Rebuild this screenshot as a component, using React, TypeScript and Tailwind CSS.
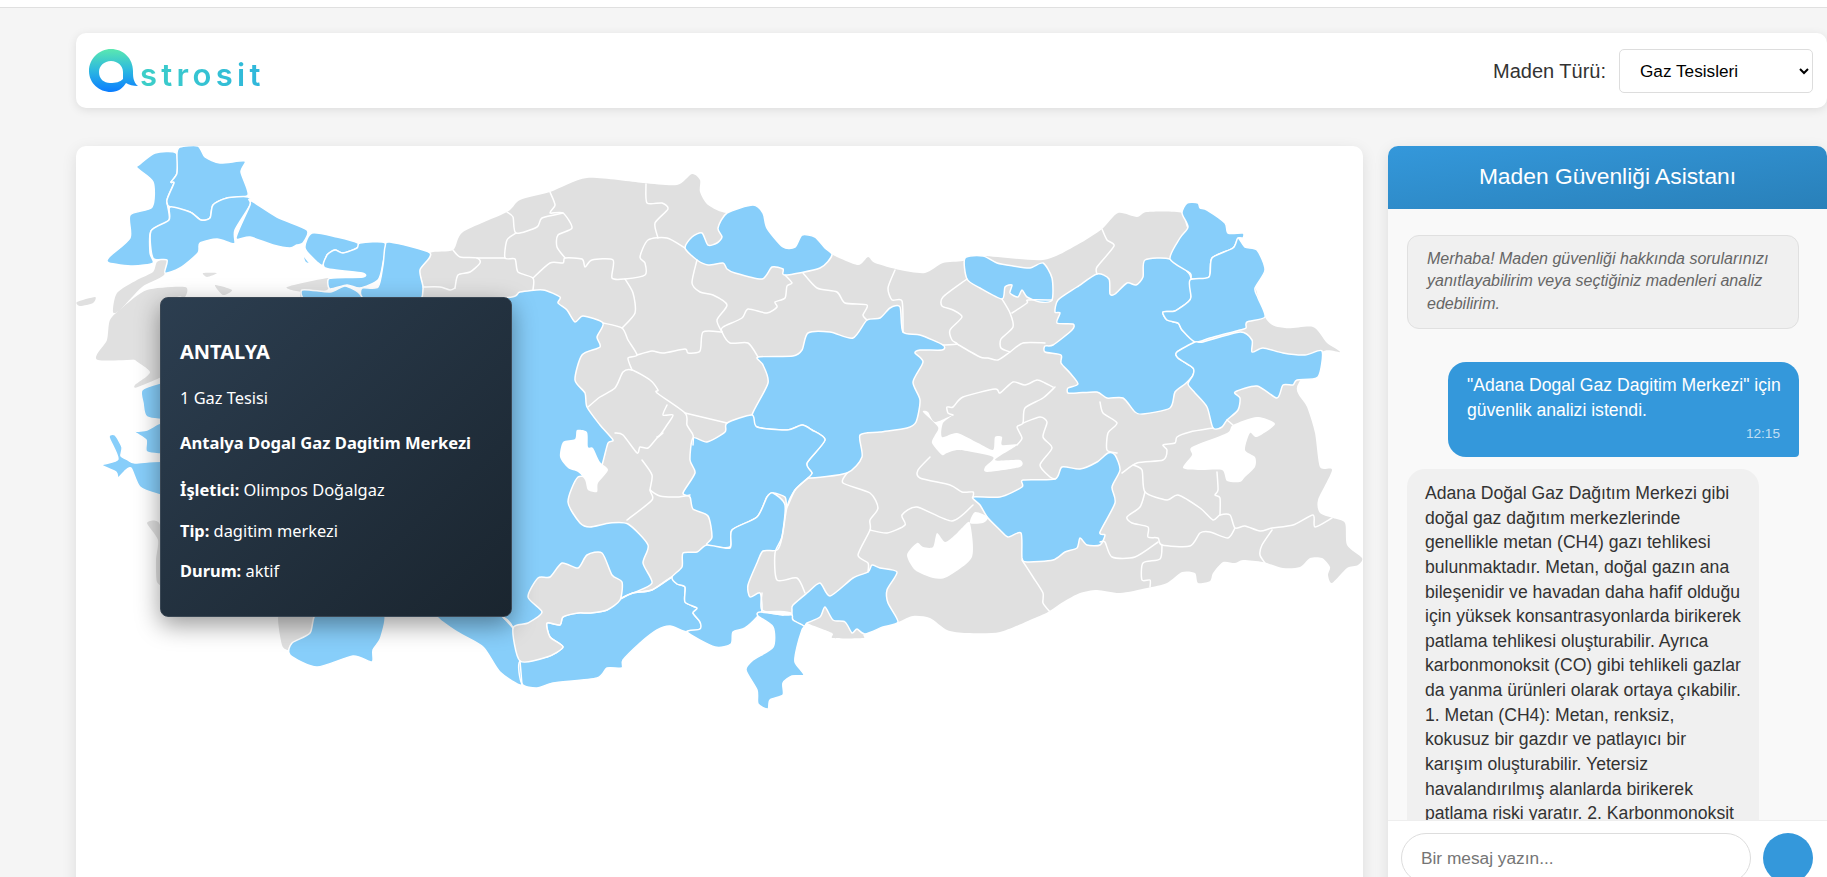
const baseLand =
  '430,253 453,250 463,232 507,212 520,200 550,192 587,178 643,183 677,185 692,174 700,180 700,192 708,205 727,213 753,205 763,213 767,228 783,247 795,247 802,235 815,237 825,248 833,255 858,265 868,257 875,263 900,270 925,273 943,263 963,261 983,256 1043,260 1077,245 1102,229 1118,213 1137,217 1147,212 1182,213 1190,230 1238,240 1265,317 1285,328 1313,327 1327,343 1340,352 1322,352 1297,387 1307,407 1315,433 1320,467 1332,470 1318,500 1320,513 1333,518 1345,523 1347,545 1362,558 1358,565 1347,568 1332,583 1328,575 1330,567 1322,558 1310,558 1300,567 1283,568 1263,562 1243,560 1235,563 1223,562 1213,573 1210,581 1198,583 1195,573 1182,572 1167,583 1147,588 1120,593 1097,590 1080,593 1063,602 1048,612 1037,617 1000,632 967,633 947,630 930,618 913,616 898,622 865,634 863,638 833,638 832,633 807,623 790,612 760,612 700,625 660,620 520,640 437,617 420,600 320,600 300,590 300,310 310,300 400,298 423,290 420,270';

const greyShapes = [
  '77,302 95,297 93,303 80,306',
  '167,259 164,275 142,287 120,310 113,312 117,293 137,280 153,272 157,262',
  '110,320 123,307 147,290 185,287 185,297 175,300 170,350 165,357 98,360 107,340',
  '133,357 170,357 170,372 138,387 135,385 150,372',
  '203,273 217,273 207,277',
  '215,285 232,290 223,295',
  '287,287 330,278 327,290 303,292',
  '147,523 160,525 165,582 157,582 156,560 158,540',
  '280,610 320,610 310,633 293,642 290,650 282,645',
];

const blueShapes = [
  '155,153 176,153 177,173 171,182 174,183 167,200 169,220 151,231 150,253 153,263 133,266 109,263 109,257 130,238 130,215 152,207 153,182 137,168 140,164',
  '177,153 180,147 198,146 205,157 220,163 245,161 241,172 248,195 227,198 213,205 210,218 201,220 190,212 170,207 167,200 174,183 171,182 177,173',
  '170,207 190,212 201,220 210,218 213,205 227,198 248,197 250,205 235,230 235,243 230,243 217,239 200,243 198,253 180,268 165,273 167,260 153,258 151,231 169,220',
  '250,200 277,217 307,230 303,243 297,245 290,248 273,245 250,237 236,238 250,205',
  '312,233 337,237 358,243 357,248 343,253 335,250 327,255 323,265 317,262 305,248',
  '360,243 385,243 383,263 378,280 360,288 347,285 330,289 328,280 333,278 363,277 362,273 325,268 327,255 335,250 343,253 357,248',
  '303,255 310,264 305,262',
  '390,242 430,253 420,270 423,287 421,300 415,305 365,305 361,297 362,288 378,287 383,265 385,247',
  '302,290 330,292 345,286 360,294 360,305 310,305',
  '142,390 160,383 170,383 170,417 147,417 143,403',
  '109,437 115,435 122,447 121,456 128,460 135,463 170,463 170,497 160,495 140,487 131,468 124,472 118,478 116,472 102,465 118,459',
  '135,432 147,430 160,423 170,423 170,452 147,452 146,440',
  '320,610 382,610 381,637 373,650 372,662 353,656 317,667 290,655 292,643 310,633',
  '520,292 543,290 560,297 558,303 567,310 575,322 583,316 603,323 597,337 600,347 582,355 575,380 585,393 587,407 600,425 613,440 608,443 602,465 595,478 578,477 568,502 580,523 590,527 610,523 628,524 648,545 643,563 652,583 633,593 622,598 607,610 590,613 560,625 520,661 513,628 503,617 480,610 445,608 435,600 430,590 430,320 435,305 460,300 512,297',
  '513,628 520,661 522,685 500,672 483,647 457,632 437,617 440,610 500,610 503,617',
  '520,661 547,657 563,647 550,637 547,623 560,625 563,617 578,613 590,613 607,610 622,598 633,593 652,590 672,577 677,584 685,587 685,602 697,608 693,613 700,622 700,629 687,632 670,626 657,630 640,643 623,660 622,668 607,668 597,678 553,683 537,688 522,684',
  '727,213 753,205 763,213 767,228 783,247 795,247 802,235 815,237 825,248 832,255 820,268 785,275 783,269 772,267 762,279 735,273 727,269 723,263 708,265 697,260 685,248 692,237 702,233 708,245 717,243 722,237 718,228',
  '758,357 793,356 802,350 808,333 830,332 853,338 867,320 880,318 890,308 900,307 903,332 920,335 943,345 942,350 920,350 915,353 923,362 913,382 920,400 916,422 907,428 880,432 860,435 862,457 847,473 808,478 812,473 807,463 825,440 812,430 802,425 787,430 757,427 752,415 768,383 763,365',
  '752,415 757,427 787,430 802,425 812,430 825,440 807,463 812,473 808,478 795,490 787,507 785,497 773,493 767,497 757,517 732,530 730,547 707,545 712,537 708,516 693,509 690,497 683,493 695,473 690,460 693,438 707,442 725,432 727,423',
  '707,545 730,548 732,530 757,517 767,497 773,493 785,505 782,537 777,550 763,551 757,563 748,585 750,597 760,593 762,610 758,616 745,628 733,632 731,644 715,647 687,632 700,629 700,622 693,613 697,608 685,602 685,587 677,584 672,577 682,567 683,553 697,552',
  '792,610 793,605 807,593 820,583 830,596 853,578 868,572 872,565 880,568 897,572 887,590 888,603 898,622 883,627 865,634 857,629 852,633 845,622 833,620 825,607 820,617 807,623 804,626 793,620',
  '760,612 783,615 792,615 793,620 804,626 802,630 797,647 795,662 804,675 792,676 783,683 783,695 770,700 768,709 758,704 757,690 746,670 753,660 773,647 773,627 758,616',
  '1108,453 1115,455 1120,470 1112,487 1115,503 1100,532 1105,535 1100,545 1087,545 1080,538 1077,548 1065,552 1053,560 1027,562 1022,558 1021,533 1008,537 1000,530 988,518 980,505 973,497 1000,497 1022,487 1023,480 1055,479 1062,467 1080,469 1097,462',
  '965,258 983,256 997,263 1013,266 1030,268 1043,263 1052,278 1052,300 1040,302 1027,297 1022,290 1018,297 1010,293 1012,285 1005,287 1002,299 980,288 967,279',
  '1097,274 1109,279 1110,294 1115,294 1127,283 1136,285 1143,277 1145,260 1170,259 1190,275 1191,297 1188,302 1175,311 1163,312 1167,320 1178,323 1182,330 1195,342 1177,352 1178,358 1193,368 1193,375 1185,384 1175,392 1170,408 1143,414 1135,412 1123,398 1107,398 1097,392 1077,393 1068,393 1068,388 1078,384 1070,373 1061,363 1061,355 1045,352 1045,346 1053,345 1072,330 1073,324 1057,323 1060,313 1055,312 1058,300 1077,287',
  '1182,213 1187,203 1198,203 1200,208 1207,210 1225,223 1228,233 1243,233 1243,238 1238,238 1233,248 1212,258 1209,277 1192,279 1190,273 1170,259 1180,238 1188,227',
  '1238,238 1245,247 1257,250 1265,270 1255,288 1258,298 1265,317 1247,322 1246,328 1240,330 1210,338 1195,342 1182,330 1178,323 1167,320 1163,312 1175,311 1188,302 1191,297 1190,280 1209,277 1212,258 1233,248',
  '1177,352 1195,342 1203,342 1240,332 1252,340 1252,352 1263,348 1283,353 1305,355 1322,351 1318,377 1297,380 1293,385 1283,385 1277,398 1257,386 1235,392 1240,398 1238,410 1227,420 1222,427 1213,428 1207,407 1195,393 1188,384 1193,375 1193,368 1178,358',
];

// Isparta side patch sits on top of the blue west block
const greyPatch =
  '528,597 538,578 550,577 562,563 578,568 587,555 602,553 612,575 622,582 620,600 607,610 590,613 578,613 563,617 560,625 547,623 550,637 563,647 547,657 520,661 513,628 528,623 542,612';

const borders = [
  '550,192 555,205 550,213 563,213 572,228 558,235 557,247 565,258',
  '507,212 513,217 516,233 537,227 542,218 563,213',
  '516,233 507,240 505,258 515,259 518,272 533,278 533,290',
  '453,250 460,257 477,258 480,263 470,272 458,275 455,288',
  '423,287 440,287 450,290 455,288',
  '477,258 505,258',
  '533,278 550,263 563,263 565,258 582,259 585,267 592,260 613,260 612,278 625,279 645,275 645,263 640,257 648,240 667,238 685,248',
  '646,184 647,203 662,203 668,209 655,223 658,238',
  '625,279 633,293 635,313 622,328',
  '603,323 622,328 628,340 637,355 628,358 632,370',
  '637,355 652,351 663,353 685,349 688,353 700,351 703,332 722,332',
  '722,332 717,320 727,305 713,295 700,292 692,283 697,260',
  '785,275 792,283 787,286 785,298 775,302 777,307 767,313 748,309 742,318 723,327 722,332 730,343 748,343 758,357',
  '803,273 817,288 837,292 845,303 867,305 863,315 867,320',
  '895,270 888,288 892,300 902,301 903,332',
  '967,279 943,297 942,306 953,310 962,317 950,330 952,340 957,344 943,345',
  '957,344 980,357 988,358 998,360 1010,352 1023,343 1045,343',
  '1002,299 1010,313 1013,327 1001,339 1001,348 1010,352',
  '1012,313 1027,303 1028,300 1052,300',
  '1102,229 1107,240 1114,246 1097,267 1097,274',
  '1053,387 1045,383 1037,380 1025,385 1013,382 1000,393 995,389 963,397 953,407 947,407 948,413 953,415',
  '1055,387 1043,398 1025,408 1023,423 1017,427 1022,438 1017,445',
  '1100,402 1103,413 1117,423 1108,433 1107,450 1117,453',
  '1023,423 1040,417 1047,422 1043,437 1052,448 1040,465 1050,477 1055,479',
  '1227,420 1233,425',
  '1213,428 1190,432 1177,437 1175,443 1163,445 1167,450 1163,460 1137,463 1122,473',
  '1133,465 1142,470 1145,492 1167,500 1178,495 1200,508 1213,520 1220,515 1230,515 1235,528 1245,526 1260,531 1272,528 1293,525 1313,515 1315,527 1332,518',
  '1145,492 1140,507 1127,517 1132,523 1148,527 1148,537 1158,538 1162,545 1190,546 1200,533 1210,532 1228,538 1235,528',
  '1217,472 1218,490 1215,495 1220,498 1220,515',
  '1100,542 1105,542 1112,557 1135,557 1158,542',
  '1162,545 1160,559 1143,563 1142,580 1150,580 1150,587',
  '1272,530 1262,545 1260,555 1265,563',
  '1022,560 1033,577 1043,593 1043,603 1050,612',
  '847,473 843,483 870,493 878,508 870,520 870,530 858,555 868,563 868,572',
  '870,530 887,533 905,525 902,515 917,507 952,521 973,505',
  '930,457 918,470 920,478 950,485 962,492 973,492 973,497',
  '808,478 795,490 787,507 782,537 775,553 777,580 797,578 805,593',
  '762,593 762,610 783,615',
  '642,460 652,475 650,490 652,500 627,520',
  '650,490 660,496 677,497 690,495',
  '615,433 623,435 637,453 640,447 648,448 657,438 663,433',
  '588,407 600,397 615,388 623,372 632,370 650,380 658,390 657,393 685,413 687,425 693,435 693,445',
  '667,405 663,415 673,415 667,425 660,435 657,437',
  '685,413 727,423',
  '622,598 633,593 652,590 672,577',
  '503,617 513,628',
  '520,661 522,685',
];

const lakes = [
  '560,457 563,442 575,439 577,430 587,432 588,447 593,448 600,462 608,470 598,483 597,492 588,490 585,480 578,472 568,468',
  '1192,447 1227,433 1233,425 1257,417 1275,424 1257,437 1250,433 1245,450 1255,457 1255,467 1245,477 1240,482 1227,481 1222,470 1200,470 1183,468 1192,455',
  '923,412 928,412 935,422 953,415 943,423 942,437 957,433 978,443 993,450 995,437 1002,437 1002,445 1017,445 995,460 1020,460 1020,467 987,472 985,467 993,457 960,450 947,453 942,455 932,443 935,435 938,427',
  '937,533 945,542 955,535 963,527 970,523 972,557 947,577 933,578 915,570 907,555 917,543 923,547 933,547',
  '975,512 988,517 983,523 970,523',
];

// soft curve through the traced points, so borders don't look like straight segments
function smooth(points: string, closed: boolean) {
  const p = points.split(' ').map((s) => s.split(',').map(Number));
  const n = p.length;
  const at = (i: number) => (closed ? p[(i + n) % n] : p[Math.max(0, Math.min(n - 1, i))]);
  const f = (v: number) => v.toFixed(1);
  let d = `M${p[0][0]} ${p[0][1]}`;
  const segs = closed ? n : n - 1;
  for (let i = 0; i < segs; i++) {
    const a = at(i - 1), b = at(i), c = at(i + 1), e = at(i + 2);
    d += `C${f(b[0] + (c[0] - a[0]) / 8)} ${f(b[1] + (c[1] - a[1]) / 8)} ${f(c[0] - (e[0] - b[0]) / 8)} ${f(c[1] - (e[1] - b[1]) / 8)} ${c[0]} ${c[1]}`;
  }
  return d + (closed ? 'Z' : '');
}

function TurkeyMap() {
  return (
    <svg viewBox="76 146 1287 750" className="block w-[1287px] h-[750px]">
      <path d={smooth(baseLand, true)} fill="#e0e0e0" />
      {greyShapes.map((p, i) => (
        <path key={i} d={smooth(p, true)} fill="#e0e0e0" />
      ))}
      <g fill="#87cefa" stroke="#ffffff" strokeWidth="1.5" strokeLinejoin="round">
        {blueShapes.map((p, i) => (
          <path key={i} d={smooth(p, true)} />
        ))}
        <path d={smooth(greyPatch, true)} fill="#e0e0e0" />
      </g>
      <g fill="none" stroke="#ffffff" strokeWidth="1.5" strokeLinejoin="round" strokeLinecap="round">
        {borders.map((p, i) => (
          <path key={i} d={smooth(p, false)} />
        ))}
      </g>
      {lakes.map((p, i) => (
        <path key={i} d={smooth(p, true)} fill="#ffffff" />
      ))}
    </svg>
  );
}

function Logo() {
  return (
    <div className="flex items-center">
      <svg viewBox="89 49 49 43" className="w-[49px] h-[43px] shrink-0">
        <defs>
          <linearGradient id="logo-mark" x1="0" y1="0" x2="0" y2="1">
            <stop offset="0" stopColor="#5ae8b0" />
            <stop offset="0.5" stopColor="#2cb8e0" />
            <stop offset="1" stopColor="#0a7cff" />
          </linearGradient>
        </defs>
        <path
          fill="url(#logo-mark)"
          fillRule="evenodd"
          d="M138 86C133 82 133 76 133 71C133 58 123 49 111 49C99 49 89 59 89 71C89 83 99 92 111 92C118 92 123 88 126 83C129 85 133 86 138 86ZM111 61C104 61 99 66 99 72C99 79 104 83 110 83C116 83 120 82 123 79L123 72C123 66 118 61 111 61Z"
        />
      </svg>
      <span className="ml-[2px] mt-[8px] text-[31px] leading-none font-semibold tracking-[4.3px] font-['Inter',sans-serif] bg-gradient-to-r from-[#3dcfc8] to-[#2fb6dc] bg-clip-text text-transparent">
        strosit
      </span>
    </div>
  );
}

function MapTooltip() {
  return (
    <div className="absolute left-[84px] top-[151px] w-[352px] h-[320px] rounded-lg pl-[19px] pt-[42px] bg-gradient-to-br from-[#2c3e50] to-[#1a252f] border border-[#3a4754] text-white shadow-[0_8px_25px_rgba(0,0,0,0.4)] font-['Noto_Sans',sans-serif] text-[16.4px] leading-[24px]">
      <div className="font-bold text-[20px]">ANTALYA</div>
      <div className="mt-[22px]">1 Gaz Tesisi</div>
      <div className="mt-[21px] font-bold text-[16.6px]">Antalya Dogal Gaz Dagitim Merkezi</div>
      <div className="mt-[23px]">
        <b>İşletici:</b> Olimpos Doğalgaz
      </div>
      <div className="mt-[17px]">
        <b>Tip:</b> dagitim merkezi
      </div>
      <div className="mt-[16px]">
        <b>Durum:</b> aktif
      </div>
    </div>
  );
}

function Chat() {
  return (
    <div className="w-[439px] h-[750px] shrink-0 flex flex-col rounded-t-[10px] overflow-hidden bg-white shadow-[0_4px_15px_rgba(0,0,0,0.1)] font-['Liberation_Sans',sans-serif]">
      <div className="h-[63px] shrink-0 flex items-center justify-center pb-[2px] bg-gradient-to-br from-[#3498db] to-[#2980b9] text-white text-[22.8px]">
        Maden Güvenliği Asistanı
      </div>
      <div className="flex-1 min-h-0 overflow-y-scroll bg-[#f9f9f9] pl-[19px] pr-[20px] pt-[26px] [&::-webkit-scrollbar]:w-2 [&::-webkit-scrollbar-track]:bg-[#f1f1f1] [&::-webkit-scrollbar-thumb]:bg-[#c1c1c1] [&::-webkit-scrollbar-thumb]:rounded">
        <div className="h-[3190px]">
          <div className="w-[392px] h-[94px] rounded-xl border border-[#e0e0e0] bg-[#f0f0f0] px-[19px] py-[12px] text-[#666666] italic text-[16px] leading-[22.4px]">
            Merhaba! Maden güvenliği hakkında sorularınızı yanıtlayabilirim veya seçtiğiniz madenleri analiz edebilirim.
          </div>
          <div className="ml-[41px] mt-[33px] w-[351px] h-[95px] rounded-[18px] rounded-br-[4px] bg-[#3498db] text-white pl-[19px] pr-[15px] pt-[11px] text-[17.6px] leading-[25px]">
            "Adana Dogal Gaz Dagitim Merkezi" için güvenlik analizi istendi.
            <div className="text-right text-[13.6px] leading-[14px] pr-[4px] mt-[4px] text-white/70">12:15</div>
          </div>
          <div className="mt-[12px] w-[352px] rounded-[18px] bg-[#f0f0f0] text-[#333333] pl-[18px] pr-[16px] pt-[12px] pb-[12px] text-[17.6px] leading-[24.64px]">
            Adana Doğal Gaz Dağıtım Merkezi gibi doğal gaz dağıtım merkezlerinde genellikle metan (CH4) gazı tehlikesi bulunmaktadır. Metan, doğal gazın ana bileşenidir ve havadan daha hafif olduğu için yüksek konsantrasyonlarda birikerek patlama tehlikesi oluşturabilir. Ayrıca karbonmonoksit (CO) gibi tehlikeli gazlar da yanma ürünleri olarak ortaya çıkabilir. 1. Metan (CH4): Metan, renksiz, kokusuz bir gazdır ve patlayıcı bir karışım oluşturabilir. Yetersiz havalandırılmış alanlarda birikerek patlama riski yaratır. 2. Karbonmonoksit
          </div>
        </div>
      </div>
      <div className="h-[76px] shrink-0 flex gap-[12px] items-start bg-white border-t border-[#eeeeee] pl-[13px] pr-[14px] pt-[12px]">
        <input
          placeholder="Bir mesaj yazın..."
          className="w-[350px] h-[50px] rounded-full border border-[#dddddd] pl-[19px] text-[17.3px] outline-none placeholder:text-[#757575]"
        />
        <div className="w-[50px] h-[50px] rounded-full bg-[#3498db]" />
      </div>
    </div>
  );
}

export default function App() {
  return (
    <div className="h-[877px] overflow-hidden bg-[#f5f5f5]">
      <div className="h-[8px] bg-white border-b border-[#e0e0e0]" />
      <div className="pl-[76px]">
        <div className="mt-[25px] h-[75px] flex items-center justify-between rounded-[10px] bg-white pl-[13px] pr-[14px] shadow-[0_2px_10px_rgba(0,0,0,0.1)]">
          <Logo />
          <div className="flex items-center gap-[13px] font-['Liberation_Sans',sans-serif]">
            <label className="text-[20px] text-[#333333]">Maden Türü:</label>
            <select className="w-[194px] h-[44px] rounded-[5px] border border-[#dddddd] bg-white pl-[16px] text-[17.2px] text-black">
              <option>Gaz Tesisleri</option>
            </select>
          </div>
        </div>
        <div className="mt-[38px] flex gap-[25px]">
          <div className="relative w-[1287px] h-[750px] shrink-0 rounded-[10px] overflow-hidden bg-white shadow-[0_4px_15px_rgba(0,0,0,0.1)]">
            <TurkeyMap />
            <MapTooltip />
          </div>
          <Chat />
        </div>
      </div>
    </div>
  );
}
